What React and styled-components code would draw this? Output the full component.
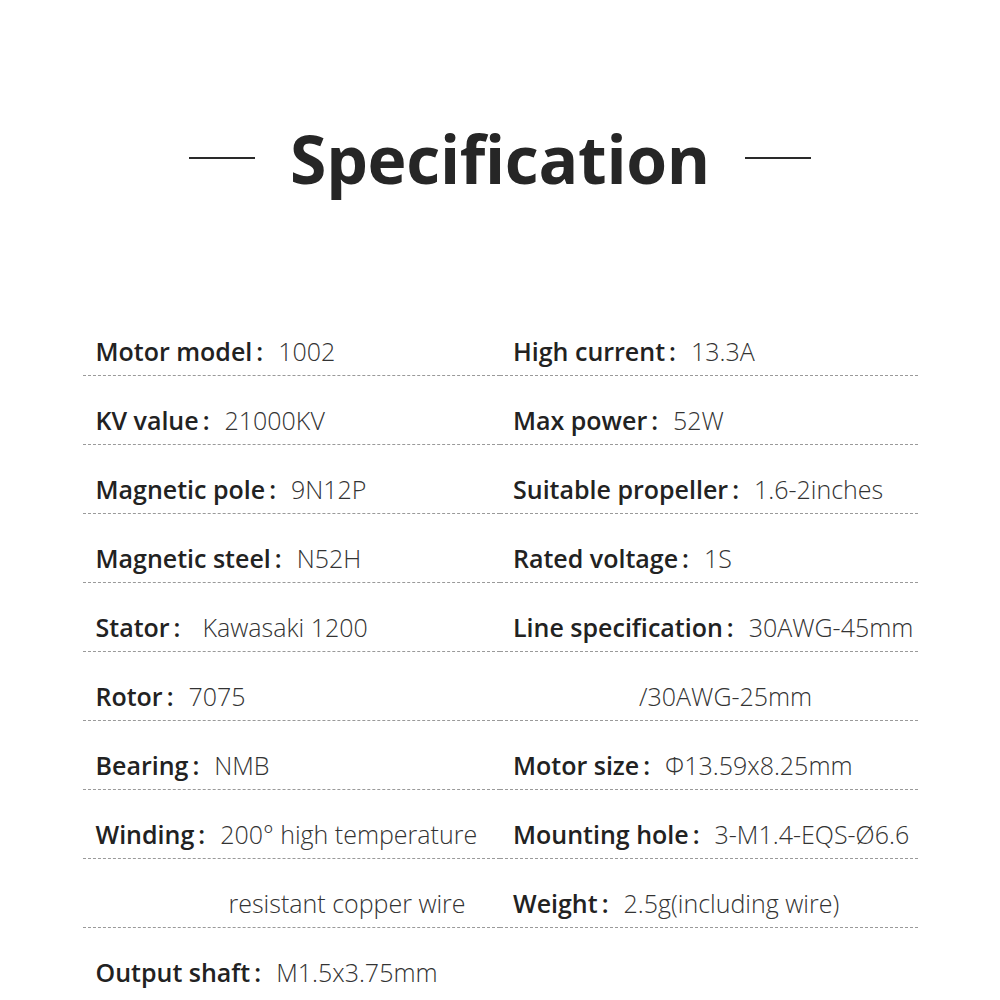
import React from "react";
import styled, { createGlobalStyle } from "styled-components";

const rows = [
  { left: { label: "Motor model", value: "1002" }, right: { label: "High current", value: "13.3A" } },
  { left: { label: "KV value", value: "21000KV" }, right: { label: "Max power", value: "52W" } },
  { left: { label: "Magnetic pole", value: "9N12P" }, right: { label: "Suitable propeller", value: "1.6-2inches" } },
  { left: { label: "Magnetic steel", value: "N52H" }, right: { label: "Rated voltage", value: "1S" } },
  { left: { label: "Stator", value: "Kawasaki 1200", wide: true }, right: { label: "Line specification", value: "30AWG-45mm" } },
  { left: { label: "Rotor", value: "7075" }, right: { value: "/30AWG-25mm", indent: 126 } },
  { left: { label: "Bearing", value: "NMB" }, right: { label: "Motor size", value: "Φ13.59x8.25mm" } },
  { left: { label: "Winding", value: "200° high temperature" }, right: { label: "Mounting hole", value: "3-M1.4-EQS-Ø6.6" } },
  { left: { value: "resistant copper wire", indent: 133 }, right: { label: "Weight", value: "2.5g(including wire)" } },
];

const Cell = ({ item, last }) => (
  <SpecCell $indent={item.indent} $last={last}>
    {item.label && (
      <Label>
        {item.label}
        <Colon>:</Colon>
      </Label>
    )}
    <Value $wide={item.wide} $plain={!item.label}>{item.value}</Value>
  </SpecCell>
);

const App = () => {
  return (
    <>
      <GlobalStyle />
      <Page>
        <TitleRow>
          <Rule />
          <Title>Specification</Title>
          <Rule />
        </TitleRow>
        <SpecGrid>
          {rows.map((row, i) => (
            <React.Fragment key={i}>
              <Cell item={row.left} />
              <Cell item={row.right} />
            </React.Fragment>
          ))}
          <Cell item={{ label: "Output shaft", value: "M1.5x3.75mm" }} last />
        </SpecGrid>
      </Page>
    </>
  );
};

export default App;

const GlobalStyle = createGlobalStyle`
  body {
    margin: 0;
    background: #ffffff;
    font-family: "Open Sans", "Noto Sans", sans-serif;
  }
`;

const Page = styled.div`
  width: 1000px;
  height: 1000px;
  overflow: hidden;
  display: flex;
  flex-direction: column;
  align-items: center;
`;

const TitleRow = styled.div`
  display: flex;
  align-items: center;
  gap: 35px;
  margin-top: 118px;
  height: 80px;
`;

const Rule = styled.div`
  width: 66px;
  height: 2px;
  background: #2a2a2a;
`;

const Title = styled.h1`
  margin: 0;
  font-size: 66px;
  line-height: 80px;
  font-weight: 700;
  color: #262626;
  letter-spacing: -0.3px;
`;

const SpecGrid = styled.div`
  width: 835px;
  margin-top: 109px;
  display: grid;
  grid-template-columns: 1fr 1fr;
`;

const SpecCell = styled.div`
  height: 58px;
  display: flex;
  align-items: flex-end;
  padding: 0 0 10px ${(p) => 13 + (p.$indent || 0)}px;
  border-bottom: ${(p) => (p.$last ? "none" : "1px dashed #9a9a9a")};
`;

const Label = styled.span`
  font-size: 25px;
  line-height: 28px;
  font-weight: 600;
  color: #222222;
  white-space: nowrap;
`;

const Colon = styled.span`
  margin-left: 4px;
`;

const Value = styled.span`
  margin-left: ${(p) => (p.$plain ? 0 : p.$wide ? 22 : 15)}px;
  font-size: 25px;
  line-height: 28px;
  font-weight: 300;
  color: #333333;
  white-space: nowrap;
`;
